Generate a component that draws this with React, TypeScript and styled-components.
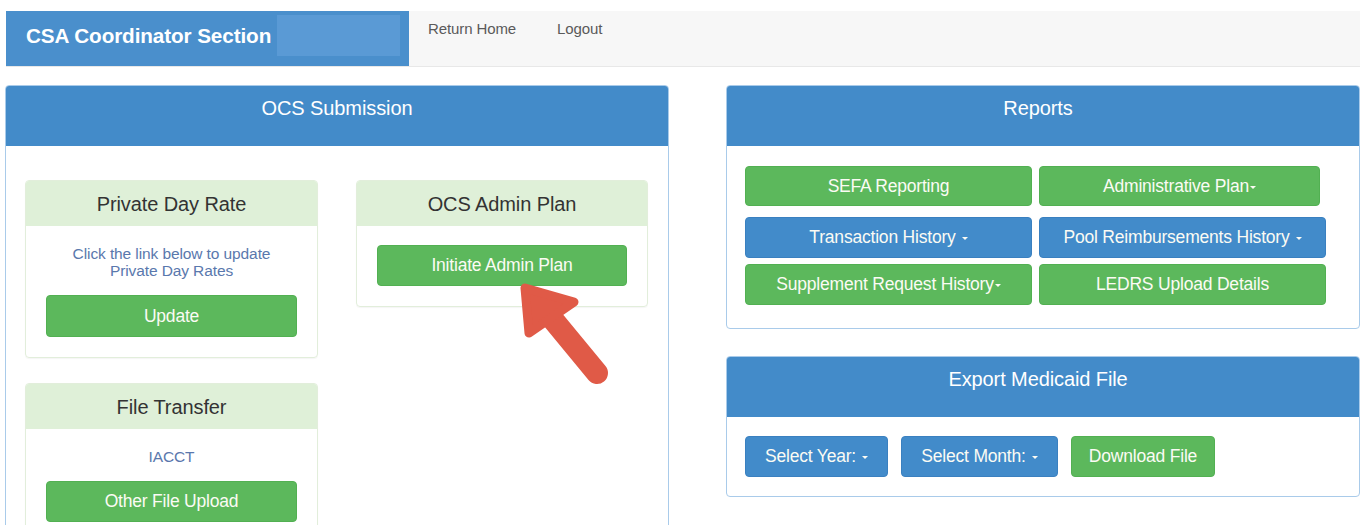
import React from "react";
import styled, { createGlobalStyle } from "styled-components";

const Global = createGlobalStyle`
  html, body {
    margin: 0;
    padding: 0;
    background: #ffffff;
    overflow: hidden;
  }
  body {
    font-family: "Liberation Sans", Arial, sans-serif;
    color: #333;
  }
`;

const Page = styled.div`
  position: relative;
  padding: 11px 3px 0 5px;
`;

/* ---------- top navigation ---------- */

const TopBar = styled.header`
  display: flex;
  height: 56px;
  margin-left: 1px;
  background: #f7f7f7;
  border-bottom: 1px solid #e8e8e8;
  box-sizing: border-box;
`;

const Brand = styled.div`
  display: flex;
  align-items: center;
  width: 403px;
  padding: 0 9px 0 20px;
  box-sizing: border-box;
  background: #4a8fcc;
  gap: 6px;
`;

const BrandTitle = styled.span`
  color: #ffffff;
  font-size: 20.7px;
  font-weight: 700;
  letter-spacing: -0.1px;
  white-space: nowrap;
  margin-top: -5px;
`;

const BrandMask = styled.span`
  width: 123px;
  height: 41px;
  margin-top: -7px;
  margin-left: auto;
  background: #5a9ad5;
`;

const Nav = styled.nav`
  display: flex;
  gap: 41px;
  padding: 9px 0 0 19px;
`;

const NavLink = styled.a`
  color: #5a5a5a;
  font-size: 15px;
  letter-spacing: -0.1px;
  text-decoration: none;
  line-height: 18px;
`;

/* ---------- panels ---------- */

const Main = styled.main`
  display: grid;
  grid-template-columns: 664px 634px;
  column-gap: 57px;
  margin-top: 18px;
  align-items: start;
`;

const Column = styled.div`
  display: flex;
  flex-direction: column;
  gap: 27px;
`;

const Panel = styled.section`
  border: 1px solid #a9cbea;
  border-radius: 4px;
  overflow: hidden;
  background: #fff;
`;

const PanelHeading = styled.h3<{ $inset?: number }>`
  margin: 0;
  height: 60px;
  box-sizing: border-box;
  padding: 10px ${(p) => p.$inset ?? 0}px 0 0;
  background: #438bc9;
  color: #ffffff;
  font-size: 20px;
  font-weight: normal;
  text-align: center;
  line-height: 24px;
  letter-spacing: -0.1px;
`;

const PanelBody = styled.div<{ $pad: string }>`
  padding: ${(p) => p.$pad};
`;

const CardGrid = styled.div`
  display: grid;
  grid-template-columns: 293px 292px;
  column-gap: 38px;
  align-items: start;
`;

const CardStack = styled.div`
  display: flex;
  flex-direction: column;
  gap: 25px;
`;

const Card = styled.div`
  border: 1px solid #e2eedb;
  border-radius: 4px;
  overflow: hidden;
  box-shadow: 0 1px 1px rgba(0, 0, 0, 0.04);
`;

const CardHeading = styled.div`
  height: 45px;
  display: flex;
  align-items: center;
  justify-content: center;
  background: #dff0d8;
  color: #333;
  font-size: 20px;
  letter-spacing: -0.1px;
  padding-top: 1px;
  box-sizing: border-box;
`;

const CardBody = styled.div`
  padding: 19px 20px 20px;
  display: flex;
  flex-direction: column;
  align-items: stretch;
`;

const Note = styled.p`
  margin: 0 0 16px;
  color: #5a78ad;
  font-size: 15.5px;
  letter-spacing: -0.1px;
  line-height: 17px;
  text-align: center;
`;

/* ---------- buttons ---------- */

const Button = styled.button<{ $tone: "green" | "blue"; $w?: number; $h?: number }>`
  display: inline-flex;
  align-items: center;
  justify-content: center;
  box-sizing: border-box;
  height: ${(p) => p.$h ?? 41}px;
  width: ${(p) => (p.$w ? `${p.$w}px` : "auto")};
  padding: 0 6px;
  border-radius: 4px;
  border: 1px solid ${(p) => (p.$tone === "green" ? "#52b052" : "#3a80c0")};
  background: ${(p) => (p.$tone === "green" ? "#5cb85c" : "#428bca")};
  color: #fbfbf4;
  font-family: "Liberation Sans", Arial, sans-serif;
  font-size: 17.5px;
  letter-spacing: -0.2px;
  white-space: nowrap;
  cursor: pointer;
`;

const Caret = styled.span<{ $gap: number }>`
  display: inline-block;
  margin-left: ${(p) => p.$gap}px;
  margin-top: 2px;
  width: 0;
  height: 0;
  border-left: 3.5px solid transparent;
  border-right: 3.5px solid transparent;
  border-top: 3.5px solid currentColor;
`;

const ButtonRows = styled.div`
  display: flex;
  flex-direction: column;
`;

const ButtonRow = styled.div<{ $top?: number }>`
  display: flex;
  gap: 7px;
  margin-top: ${(p) => p.$top ?? 0}px;
`;

const Toolbar = styled.div`
  display: flex;
  gap: 13px;
`;

/* ---------- pointer arrow over the admin plan card ---------- */

const Pointer = styled.svg`
  position: absolute;
  left: 500px;
  top: 270px;
  width: 120px;
  height: 120px;
  pointer-events: none;
`;

export default function App() {
  return (
    <Page>
      <Global />
      <TopBar>
        <Brand>
          <BrandTitle>CSA Coordinator Section</BrandTitle>
          <BrandMask />
        </Brand>
        <Nav>
          <NavLink href="#">Return Home</NavLink>
          <NavLink href="#">Logout</NavLink>
        </Nav>
      </TopBar>

      <Main>
        <Panel>
          <PanelHeading>OCS Submission</PanelHeading>
          <PanelBody $pad="34px 20px 40px 19px">
            <CardGrid>
              <CardStack>
                <Card>
                  <CardHeading>Private Day Rate</CardHeading>
                  <CardBody>
                    <Note>
                      Click the link below to update
                      <br />
                      Private Day Rates
                    </Note>
                    <Button $tone="green" $h={42}>Update</Button>
                  </CardBody>
                </Card>
                <Card>
                  <CardHeading>File Transfer</CardHeading>
                  <CardBody>
                    <Note>IACCT</Note>
                    <Button $tone="green">Other File Upload</Button>
                  </CardBody>
                </Card>
              </CardStack>
              <Card>
                <CardHeading>OCS Admin Plan</CardHeading>
                <CardBody>
                  <Button $tone="green">Initiate Admin Plan</Button>
                </CardBody>
              </Card>
            </CardGrid>
          </PanelBody>
        </Panel>

        <Column>
          <Panel>
            <PanelHeading $inset={10}>Reports</PanelHeading>
            <PanelBody $pad="20px 18px 23px 18px">
              <ButtonRows>
                <ButtonRow>
                  <Button $tone="green" $w={287} $h={40}>SEFA Reporting</Button>
                  <Button $tone="green" $w={281} $h={40}>
                    Administrative Plan<Caret $gap={1} />
                  </Button>
                </ButtonRow>
                <ButtonRow $top={11}>
                  <Button $tone="blue" $w={287}>
                    Transaction History<Caret $gap={6} />
                  </Button>
                  <Button $tone="blue" $w={287}>
                    Pool Reimbursements History<Caret $gap={6} />
                  </Button>
                </ButtonRow>
                <ButtonRow $top={6}>
                  <Button $tone="green" $w={287}>
                    Supplement Request History<Caret $gap={1} />
                  </Button>
                  <Button $tone="green" $w={287}>LEDRS Upload Details</Button>
                </ButtonRow>
              </ButtonRows>
            </PanelBody>
          </Panel>

          <Panel>
            <PanelHeading $inset={10}>Export Medicaid File</PanelHeading>
            <PanelBody $pad="19px 18px 19px 18px">
              <Toolbar>
                <Button $tone="blue" $w={143}>
                  Select Year:<Caret $gap={6} />
                </Button>
                <Button $tone="blue" $w={157}>
                  Select Month:<Caret $gap={6} />
                </Button>
                <Button $tone="green" $w={144}>Download File</Button>
              </Toolbar>
            </PanelBody>
          </Panel>
        </Column>
      </Main>

      <Pointer viewBox="0 0 120 120">
        <line
          x1="50"
          y1="46"
          x2="97"
          y2="103"
          stroke="#e05a47"
          strokeWidth="22"
          strokeLinecap="round"
        />
        <polygon
          points="25,18 29,63 74,32"
          fill="#e05a47"
          stroke="#e05a47"
          strokeWidth="9"
          strokeLinejoin="round"
        />
      </Pointer>
    </Page>
  );
}
